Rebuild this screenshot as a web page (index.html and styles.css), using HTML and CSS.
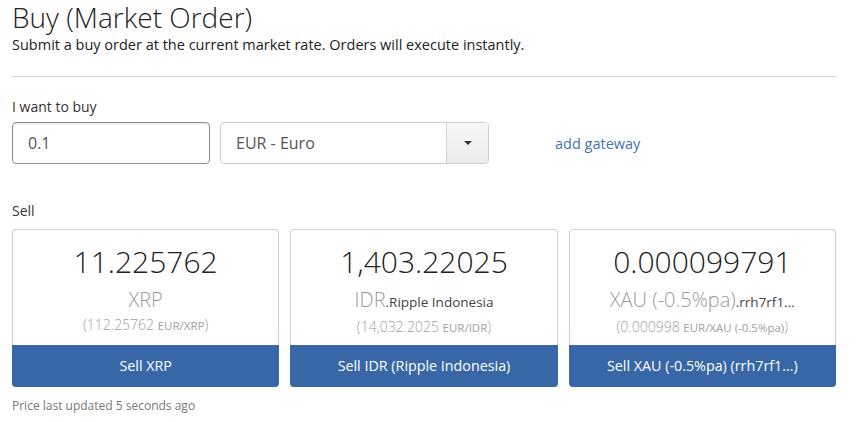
FILE: index.html
```html
<!DOCTYPE html>
<html>
<head>
<meta charset="utf-8">
<link rel="stylesheet" href="styles.css">
</head>
<body>
<div class="page">
  <h1 class="title">Buy (Market Order)</h1>
  <p class="subtitle">Submit a buy order at the current market rate. Orders will execute instantly.</p>
  <div class="rule"></div>
  <div class="label buy-label">I want to buy</div>
  <div class="form-row">
    <div class="amount">0.1</div>
    <div class="select">
      <span class="select-text">EUR - Euro</span>
      <span class="select-btn"><span class="caret"></span></span>
    </div>
    <a class="gateway">add gateway</a>
  </div>
  <div class="label sell-label">Sell</div>
  <div class="cards">
    <div class="card">
      <div class="card-body">
        <div class="big">11.225762</div>
        <div class="cur">XRP</div>
        <div class="rate">(112.25762 <small>EUR/XRP</small>)</div>
      </div>
      <div class="sell-btn">Sell XRP</div>
    </div>
    <div class="card">
      <div class="card-body">
        <div class="big">1,403.22025</div>
        <div class="cur">IDR<span class="issuer">.Ripple Indonesia</span></div>
        <div class="rate">(14,032.2025 <small>EUR/IDR</small>)</div>
      </div>
      <div class="sell-btn">Sell IDR (Ripple Indonesia)</div>
    </div>
    <div class="card">
      <div class="card-body">
        <div class="big">0.000099791</div>
        <div class="cur">XAU (-0.5%pa)<span class="issuer">.rrh7rf1...</span></div>
        <div class="rate">(0.000998 <small>EUR/XAU (-0.5%pa)</small>)</div>
      </div>
      <div class="sell-btn">Sell XAU (-0.5%pa) (rrh7rf1...)</div>
    </div>
  </div>
  <div class="updated">Price last updated 5 seconds ago</div>
</div>
</body>
</html>
```
FILE: styles.css
```css
html, body {
  margin: 0;
  padding: 0;
  background: #ffffff;
}
body {
  font-family: "Open Sans", "DejaVu Sans", sans-serif;
  color: #222;
}
.page {
  padding: 0 20px 0 12px;
}
.title {
  font-weight: 300;
  font-size: 28px;
  line-height: 38px;
  margin: -2px 0 0 0;
  color: #222;
}
.subtitle {
  font-size: 14.5px;
  line-height: 18px;
  margin: 0;
  color: #222;
}
.rule {
  height: 1px;
  background: #d4d4d4;
  margin-top: 22px;
}
.label {
  font-size: 14px;
  line-height: 18px;
  color: #333;
}
.buy-label {
  margin-top: 21px;
}
.form-row {
  display: flex;
  align-items: center;
  margin-top: 6px;
}
.amount {
  box-sizing: border-box;
  width: 198px;
  height: 42px;
  border: 1px solid #8e8e8e;
  border-radius: 4px;
  box-shadow: inset 0 1px 2px rgba(0,0,0,0.12);
  font-size: 16px;
  line-height: 40px;
  padding-left: 15px;
  color: #555;
}
.select {
  box-sizing: border-box;
  width: 269px;
  height: 42px;
  margin-left: 10px;
  border: 1px solid #cfcfcf;
  border-radius: 4px;
  display: flex;
  overflow: hidden;
}
.select-text {
  flex: 1;
  font-size: 16px;
  line-height: 40px;
  padding-left: 15px;
  color: #555;
}
.select-btn {
  width: 41px;
  border-left: 1px solid #d4d4d4;
  background: linear-gradient(#f7f7f7, #ebebeb);
  display: flex;
  align-items: center;
  justify-content: center;
}
.caret {
  width: 0;
  height: 0;
  border-left: 4px solid transparent;
  border-right: 4px solid transparent;
  border-top: 4px solid #333;
}
.gateway {
  margin-left: 66px;
  font-size: 14.5px;
  color: #3f74b0;
}
.sell-label {
  margin-top: 38px;
}
.cards {
  display: flex;
  gap: 11px;
  margin-top: 9px;
}
.card {
  flex: 1;
  display: flex;
  flex-direction: column;
}
.card-body {
  box-sizing: border-box;
  height: 116px;
  border: 1px solid #d2d2d2;
  border-bottom: none;
  border-radius: 4px 4px 0 0;
  text-align: center;
  padding-top: 14px;
}
.big {
  font-weight: 300;
  font-size: 30px;
  line-height: 36px;
  color: #222;
}
.cur {
  font-weight: 300;
  font-size: 20px;
  line-height: 24px;
  margin-top: 8px;
  color: #9a9a9a;
}
.issuer {
  font-weight: 400;
  font-size: 13.5px;
  color: #444;
}
.rate {
  font-weight: 300;
  font-size: 14px;
  line-height: 18px;
  margin-top: 4px;
  color: #a0a0a0;
}
.rate small {
  font-weight: 400;
  font-size: 11.5px;
}
.sell-btn {
  height: 42px;
  background: #3767a7;
  color: #fff;
  font-size: 14.3px;
  line-height: 42px;
  text-align: center;
  border-radius: 0 0 4px 4px;
}
.updated {
  font-size: 12px;
  line-height: 16px;
  margin-top: 11px;
  color: #777;
}
```
